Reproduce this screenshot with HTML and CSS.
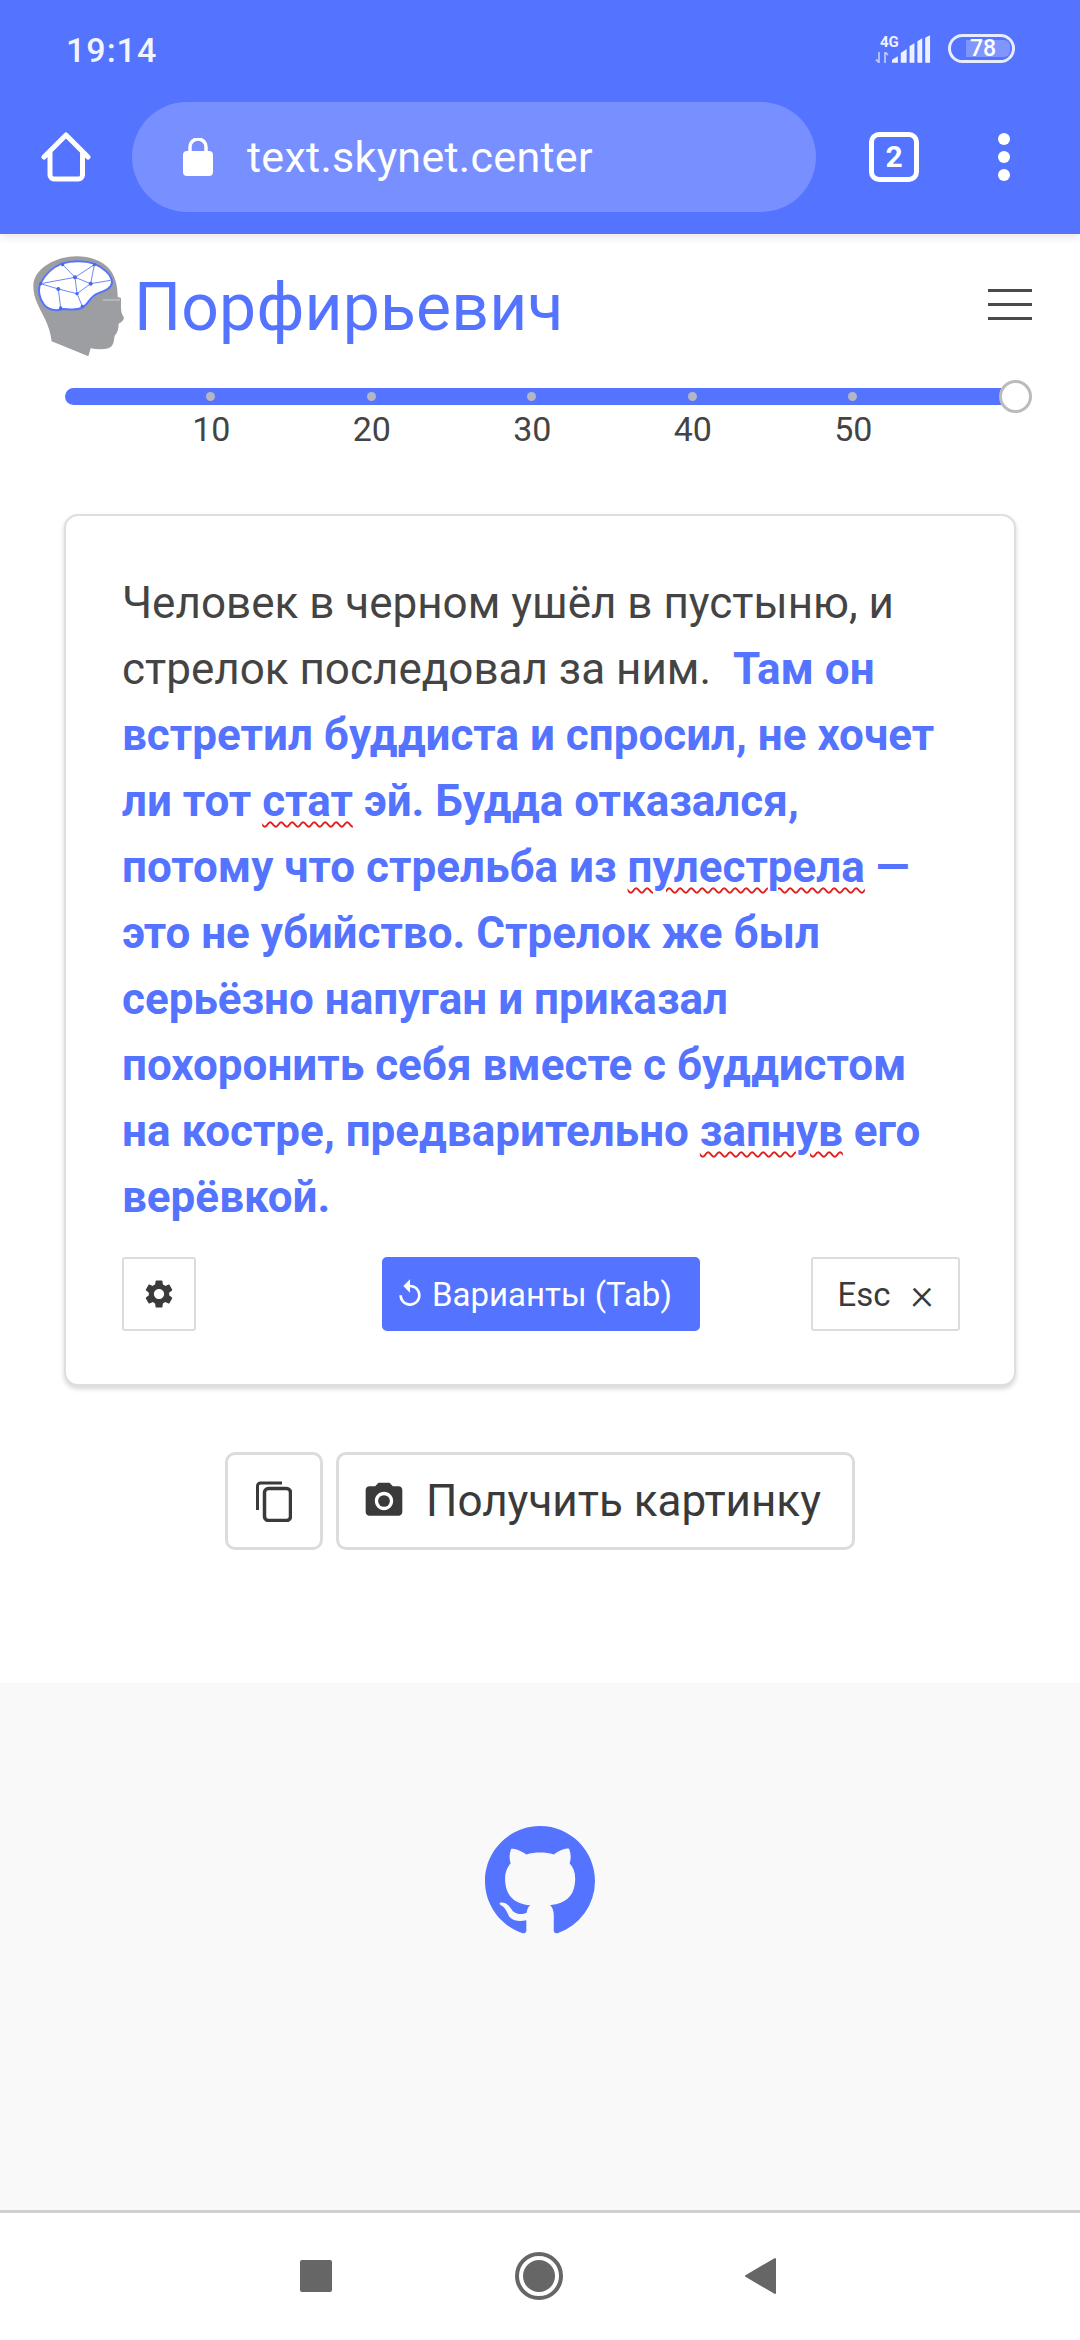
FILE: index.html
```html
<!DOCTYPE html>
<html lang="ru">
<head>
  <meta charset="UTF-8">
  <meta name="viewport" content="width=device-width, initial-scale=1.0">
  <title>Порфирьевич</title>
  <link rel="stylesheet" href="styles.css">
</head>
<body>
  <header class="chrome">
    <div class="status-bar">
      <span class="clock">19:14</span>
      <div class="status-icons">
        <div class="net">
          <span class="net-label">4G</span>
          <svg class="net-arrows" width="14" height="11" viewBox="0 0 14 11"><path d="M4 0v11M1 7.500l3 3M10 11V0M10 0l3 3" stroke="#b9c6ff" stroke-width="1.800" fill="none"/></svg>
        </div>
        <svg class="signal" width="40" height="28" viewBox="0 0 41 28"><path d="M0 28v-3l6-3.500v6.500zM9 28V18l6-4v14zM18 28V11l5-3v20zM26 28V6l5-3v25zM34 28V2.500L39 0v28z" fill="#eef1ff"/></svg>
        <div class="battery"><span class="battery-fill"></span><span class="battery-num">78</span></div>
      </div>
    </div>
    <div class="toolbar">
      <svg class="home-icon" width="50" height="50" viewBox="0 0 50 50"><path d="M3 25L25 3l22 22M9 20v23a4 4 0 0 0 4 4h24.500a4 4 0 0 0 4-4V20" fill="none" stroke="#fff" stroke-width="5" stroke-linecap="round" stroke-linejoin="round"/></svg>
      <div class="url-pill">
        <svg class="lock-icon" width="30" height="38" viewBox="0 0 30 38"><path d="M7 16V9a8 8 0 0 1 16 0v7" fill="none" stroke="#fff" stroke-width="3.500"/><rect x="0" y="13" width="30" height="25" rx="4" fill="#fff"/></svg>
        <span class="url-text">text.skynet.center</span>
      </div>
      <div class="tab-count">2</div>
      <div class="more-dots"><i></i><i></i><i></i></div>
    </div>
  </header>

  <main class="page">
    <nav class="brand-row">
      <div class="brand">
        <svg class="logo" width="95" height="105" viewBox="30 40 285 315">
          <path d="M170 50C110 50 40 85 40 140C40 175 58 205 72 232C85 258 92 280 95 305L205 350L212 326C235 330 262 330 272 322C282 314 282 298 284 288C292 280 296 268 296 252C304 248 314 240 311 232C305 222 303 215 303 205V175L293 172C293 150 290 115 270 90C245 62 210 50 170 50Z" fill="#9d9ea1"/>
          <path d="M125 72C155 62 195 62 222 72C250 84 275 105 276 128C276 145 255 155 232 162C210 170 205 195 185 205C165 213 145 208 128 208C110 215 85 212 72 195C58 178 52 150 62 130C75 105 100 82 125 72Z" fill="#fff" stroke="#5473ff" stroke-width="6"/>
          <path d="M128 75L165 113L223 75L212 132L165 113L62 132L115 148L171 162L165 113M212 132L171 162L187 200M212 132L272 122M115 148L122 205" fill="none" stroke="#6f8af5" stroke-width="3"/>
          <g fill="#4a68ea"><circle cx="128" cy="75" r="5"/><circle cx="223" cy="75" r="5"/><circle cx="165" cy="113" r="6"/><circle cx="212" cy="132" r="6"/><circle cx="62" cy="132" r="5"/><circle cx="115" cy="148" r="6"/><circle cx="171" cy="162" r="5"/><circle cx="187" cy="200" r="5"/><circle cx="122" cy="205" r="5"/></g>
          <path d="M248 181h52" stroke="#e4e4e6" stroke-width="2"/>
        </svg>
        <span class="brand-name">Порфирьевич</span>
      </div>
      <div class="burger"><i></i><i></i><i></i></div>
    </nav>

    <section class="slider">
      <div class="track">
        <span class="tick"></span><span class="tick"></span><span class="tick"></span><span class="tick"></span><span class="tick"></span>
        <span class="thumb"></span>
      </div>
      <div class="scale">
        <span>10</span><span>20</span><span>30</span><span>40</span><span>50</span>
      </div>
    </section>

    <section class="card">
      <p class="story">Человек в черном ушёл в пустыню, и стрелок последовал за ним. &nbsp;<span class="gen">Там он встретил буддиста и спросил, не хочет ли тот <u>стат</u> эй. Будда отказался, потому что стрельба из <u>пулестрела</u> — это не убийство. Стрелок же был серьёзно напуган и приказал похоронить себя вместе с буддистом на костре, предварительно <u>запнув</u> его верёвкой.</span></p>
      <div class="card-actions">
        <button class="btn btn-gear">
          <svg width="34" height="34" viewBox="0 0 24 24"><path fill="#3a3a3a" d="M19.140 12.940c.04-.3.06-.61.06-.94 0-.32-.02-.64-.07-.94l2.030-1.580c.18-.14.23-.41.12-.61l-1.920-3.320c-.12-.22-.37-.29-.59-.22l-2.390.96c-.5-.38-1.030-.7-1.620-.94l-.36-2.540c-.04-.24-.24-.41-.48-.41h-3.840c-.24 0-.43.17-.47.41l-.36 2.540c-.59.24-1.130.57-1.620.94l-2.390-.96c-.22-.08-.47 0-.59.22L2.740 8.870c-.12.21-.08.47.12.61l2.030 1.580c-.05.3-.09.63-.09.94s.02.64.07.94l-2.030 1.580c-.18.14-.23.41-.12.61l1.920 3.320c.12.22.37.29.59.22l2.390-.96c.5.38 1.030.7 1.620.94l.36 2.540c.05.24.24.41.48.41h3.840c.24 0 .44-.17.47-.41l.36-2.540c.59-.24 1.130-.56 1.620-.94l2.390.96c.22.08.47 0 .59-.22l1.920-3.320c.12-.22.07-.47-.12-.61l-2.010-1.580zM12 15.600c-1.980 0-3.600-1.620-3.600-3.600s1.620-3.600 3.600-3.600 3.600 1.620 3.600 3.600-1.620 3.600-3.600 3.600z"/></svg>
        </button>
        <button class="btn btn-primary">
          <svg width="32" height="32" viewBox="0 0 24 24"><path fill="#fff" d="M12 5V1L7 6l5 5V7c3.310 0 6 2.690 6 6s-2.690 6-6 6-6-2.690-6-6H4c0 4.420 3.580 8 8 8s8-3.580 8-8-3.580-8-8-8z"/></svg>
          <span>Варианты (Tab)</span>
        </button>
        <button class="btn btn-esc"><span>Esc</span><span class="esc-x">×</span></button>
      </div>
    </section>

    <div class="share-row">
      <button class="btn btn-share btn-copy">
        <svg width="36" height="41" viewBox="0 0 36 41"><path d="M1.500 29V5a3 3 0 0 1 3-3H26" fill="none" stroke="#3a3a3a" stroke-width="3"/><rect x="8.500" y="7.500" width="26" height="32" rx="4" fill="none" stroke="#3a3a3a" stroke-width="3.500"/></svg>
      </button>
      <button class="btn btn-share btn-picture">
        <svg width="44" height="44" viewBox="0 0 24 24"><circle cx="12" cy="12" r="3.200" fill="#3a3a3a"/><path fill="#3a3a3a" d="M9 2L7.170 4H4c-1.100 0-2 .9-2 2v12c0 1.100.9 2 2 2h16c1.100 0 2-.9 2-2V6c0-1.100-.9-2-2-2h-3.170L15 2H9zm3 15c-2.760 0-5-2.240-5-5s2.240-5 5-5 5 2.240 5 5-2.240 5-5 5z"/></svg>
        <span>Получить картинку</span>
      </button>
    </div>
  </main>

  <footer class="site-footer">
    <svg class="github" width="110" height="110" viewBox="0 0 16 16"><path fill="#5473ff" d="M8 0C3.580 0 0 3.580 0 8c0 3.540 2.290 6.530 5.470 7.590.4.070.55-.17.55-.38 0-.19-.01-.82-.01-1.490-2.010.37-2.530-.49-2.690-.94-.09-.23-.48-.94-.82-1.130-.28-.15-.68-.52-.01-.53.63-.01 1.080.58 1.230.82.72 1.210 1.870.87 2.330.66.07-.52.28-.87.51-1.070-1.780-.2-3.640-.89-3.640-3.950 0-.87.31-1.590.82-2.150-.08-.2-.36-1.020.08-2.120 0 0 .67-.21 2.200.82.64-.18 1.320-.27 2-.27s1.360.09 2 .27c1.530-1.040 2.200-.82 2.200-.82.44 1.100.16 1.920.08 2.120.51.56.82 1.270.82 2.150 0 3.070-1.870 3.750-3.650 3.950.29.25.54.73.54 1.480 0 1.070-.01 1.930-.01 2.200 0 .21.15.46.55.38A8.010 8.010 0 0 0 16 8c0-4.420-3.580-8-8-8z"/></svg>
  </footer>

  <div class="nav-bar">
    <span class="nav-square"></span>
    <span class="nav-circle"><i></i></span>
    <svg width="31" height="36" viewBox="0 0 31 36"><path d="M30 1L1 18l29 17z" fill="#666" stroke="#666" stroke-width="2" stroke-linejoin="round"/></svg>
  </div>
</body>
</html>
```

FILE: styles.css
```css
* {
  box-sizing: border-box;
}
body {
  margin: 0;
  width: 1080px;
  height: 2340px;
  display: flex;
  flex-direction: column;
  font-family: Roboto, "Noto Sans", sans-serif;
  background: #fff;
  color: #444;
  overflow: hidden;
}
i {
  display: block;
}

/* browser chrome */
.chrome {
  height: 234px;
  flex-shrink: 0;
  background: #5473ff;
  color: #fff;
  box-shadow: 0 3px 9px rgba(0, 0, 0, 0.1);
  position: relative;
  z-index: 1;
}
.status-bar {
  height: 102px;
  display: flex;
  justify-content: space-between;
  padding: 30px 65px 0 66px;
}
.clock {
  font-size: 34px;
  font-weight: 500;
  line-height: 40px;
  letter-spacing: 1px;
  color: #f2f4ff;
}
.status-icons {
  display: flex;
  align-items: flex-start;
  height: 40px;
  padding-top: 4px;
}
.net {
  width: 24px;
  display: flex;
  flex-direction: column;
}
.net-label {
  font-size: 15px;
  font-weight: 700;
  line-height: 16px;
  padding-left: 5px;
  color: #eef1ff;
}
.net-arrows {
  margin-top: 2px;
}
.signal {
  margin: 1px 16px 0 -7px;
}
.battery {
  width: 67px;
  height: 29px;
  border: 3px solid #e8ecff;
  border-radius: 15px;
  padding: 3px 2px 3px 15px;
  position: relative;
}
.battery-fill {
  display: block;
  height: 100%;
  background: #7f96ff;
  border-radius: 0 6px 6px 0;
}
.battery-num {
  position: absolute;
  left: 19px;
  top: 0;
  font-size: 23px;
  font-weight: 500;
  line-height: 24px;
}
.toolbar {
  height: 110px;
  display: flex;
  align-items: center;
  padding-left: 41px;
}
.home-icon {
  margin-right: 41px;
}
.url-pill {
  width: 684px;
  height: 110px;
  border-radius: 55px;
  background: #778fff;
  display: flex;
  align-items: center;
  padding-left: 51px;
}
.lock-icon {
  margin-right: 34px;
}
.url-text {
  font-size: 43px;
  letter-spacing: 0.3px;
}
.tab-count {
  width: 50px;
  height: 50px;
  margin-left: 53px;
  border: 5px solid #fff;
  border-radius: 10px;
  font-size: 30px;
  font-weight: 700;
  line-height: 40px;
  text-align: center;
}
.more-dots {
  margin-left: 79px;
  display: flex;
  flex-direction: column;
  gap: 6px;
}
.more-dots i {
  width: 12px;
  height: 12px;
  border-radius: 50%;
  background: #fff;
}

/* page */
.page {
  height: 1449px;
  flex-shrink: 0;
  display: flex;
  flex-direction: column;
}
.brand-row {
  display: flex;
  justify-content: space-between;
  align-items: flex-start;
  padding: 19px 48px 0 30px;
  height: 154px;
}
.brand {
  display: flex;
  align-items: center;
}
.brand-name {
  font-size: 66px;
  letter-spacing: 0.2px;
  color: #5473ff;
  margin-left: 9px;
  margin-top: 4px;
}
.burger {
  width: 44px;
  margin-top: 36px;
  display: flex;
  flex-direction: column;
  gap: 11px;
}
.burger i {
  height: 3px;
  background: #4a4a4a;
}

.slider {
  padding: 0 65px;
}
.track {
  height: 17px;
  border-radius: 9px 0 0 9px;
  background: #5473ff;
  position: relative;
}
.tick {
  position: absolute;
  top: 4px;
  width: 9px;
  height: 9px;
  border-radius: 50%;
  background: #b4b6c4;
}
.tick:nth-child(1) { left: 141px; }
.tick:nth-child(2) { left: 302px; }
.tick:nth-child(3) { left: 462px; }
.tick:nth-child(4) { left: 623px; }
.tick:nth-child(5) { left: 783px; }
.thumb {
  position: absolute;
  right: -17px;
  top: -8px;
  width: 33px;
  height: 33px;
  border-radius: 50%;
  background: #fff;
  border: 3px solid #bbb;
}
.scale {
  display: grid;
  grid-template-columns: repeat(5, 160.500px);
  margin-left: 66px;
  margin-top: 6px;
  font-size: 34px;
  line-height: 36px;
  color: #444;
  text-align: center;
}

.card {
  width: 952px;
  height: 872px;
  margin: 67px 0 0 64px;
  padding: 0 56px;
  background: #fff;
  border: 2px solid #dedede;
  border-radius: 14px;
  box-shadow: 0 3px 5px rgba(0, 0, 0, 0.16);
}
.story {
  margin: 54px 0 0;
  font-size: 44px;
  line-height: 66px;
  height: 687px;
  color: #444;
}
.gen {
  color: #5473ff;
  font-weight: 700;
}
.gen u {
  text-decoration: underline wavy #e02020 2px;
  text-underline-offset: 5px;
}
.card-actions {
  display: flex;
  align-items: center;
  margin-right: -2px;
}
.btn {
  display: flex;
  align-items: center;
  justify-content: center;
  background: #fff;
  border: 2px solid #dcdcdc;
  border-radius: 3px;
  color: #3a3a3a;
  font-family: inherit;
  padding: 0;
}
.btn-gear {
  width: 74px;
  height: 74px;
}
.btn-primary {
  width: 318px;
  height: 74px;
  margin-left: 186px;
  background: #5473ff;
  border-color: #5473ff;
  border-radius: 5px;
  color: #fff;
  font-size: 33px;
  justify-content: flex-start;
  padding-left: 10px;
  gap: 6px;
}
.btn-esc {
  width: 149px;
  height: 74px;
  margin-left: auto;
  font-size: 33px;
  gap: 20px;
}
.esc-x {
  font-size: 44px;
  font-weight: 300;
  line-height: 32px;
}
.share-row {
  display: flex;
  justify-content: center;
  gap: 13px;
  margin-top: 66px;
}
.btn-share {
  height: 98px;
  border-width: 3px;
  border-radius: 10px;
  font-size: 44px;
}
.btn-copy {
  width: 98px;
}
.btn-picture {
  width: 519px;
  gap: 20px;
  padding-right: 8px;
}

/* footer */
.site-footer {
  height: 527px;
  flex-shrink: 0;
  background: #f9f9f9;
  display: flex;
  justify-content: center;
  padding-top: 143px;
}
.github {
  display: block;
}
.nav-bar {
  flex: 1;
  border-top: 3px solid #cfcfcf;
  display: flex;
  align-items: center;
  padding: 0 304px 2px 300px;
  justify-content: space-between;
}
.nav-square {
  width: 32px;
  height: 32px;
  border-radius: 2px;
  background: #666;
}
.nav-circle {
  width: 48px;
  height: 48px;
  border-radius: 50%;
  border: 4px solid #666;
  padding: 4px;
}
.nav-circle i {
  width: 100%;
  height: 100%;
  border-radius: 50%;
  background: #666;
}
```
